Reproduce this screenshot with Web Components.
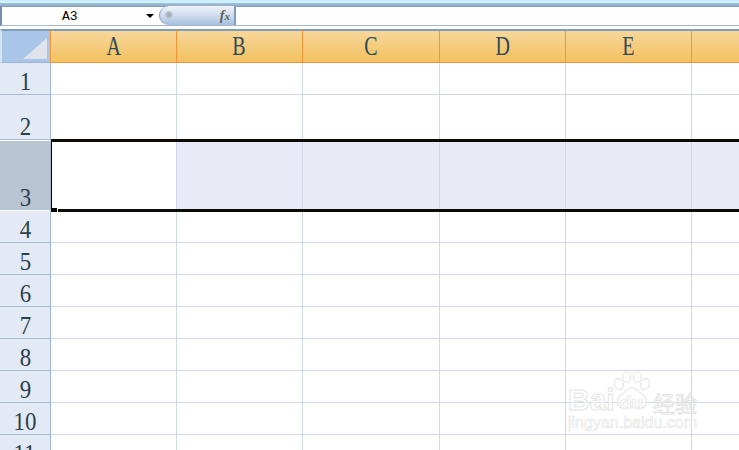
<!DOCTYPE html>
<html>
<head>
<meta charset="utf-8">
<style>
  html, body { margin: 0; padding: 0; height: 100%; overflow: hidden; background: #fff; }
</style>
</head>
<body>
<excel-window></excel-window>
<script>
// column widths and row heights include their right/bottom grid line
const COLS = [
  ['A', 126], ['B', 126], ['C', 137], ['D', 126], ['E', 126], ['', 60]
];
const ROWS = [
  ['1', 32], ['2', 45], ['3', 71], ['4', 32], ['5', 32], ['6', 32], ['7', 32],
  ['8', 32], ['9', 32], ['10', 32], ['11', 32]
];
const SELECTED_ROW = '3';

class FormulaBar extends HTMLElement {
  constructor() {
    super();
    this.attachShadow({ mode: 'open' });
    this.shadowRoot.innerHTML = `
      <style>
        :host { display: block; height: 29px; background: #fff; }
        .ribbon { height: 6px; background: linear-gradient(#c4eefc 0, #d3f3fd 50%, #a5bdd8 50%, #93aeca 100%); }
        .bar { display: flex; height: 20px; box-sizing: border-box; border-top: 1px solid #7f9cbb; border-left: 2px solid #6f91b3; border-bottom: 1px solid #a9b9cb; }
        .name {
          width: 155px; box-sizing: border-box; padding-left: 60px; display: flex; align-items: center;
          font: 13px "Liberation Mono", monospace; color: #000; position: relative;
        }
        .arrow { position: absolute; left: 144px; top: 7px; width: 0; height: 0;
          border-left: 4px solid transparent; border-right: 4px solid transparent; border-top: 4px solid #000; }
        .fx {
          width: 77px; height: 19px; box-sizing: border-box; margin: -1px 0 0 2px;
          border-radius: 10px 0 0 10px; border-left: 1px solid #7f9dbe; border-right: 2px solid #7f9dbe;
          background: linear-gradient(#f0f4fa, #cfdcee 50%, #a6bfde);
          display: flex; align-items: center; justify-content: flex-end; padding-right: 4px;
          position: relative;
          font: italic bold 14px "Liberation Serif", serif; color: #5f5f5f;
        }
        .fx::before { content: ''; position: absolute; left: 5px; top: 5px; width: 8px; height: 8px;
          border-radius: 50%; background: radial-gradient(#98a2ae, #d5dee8); }
        .fx small { font-size: 11px; }
        .line { flex: 1; }
      </style>
      <div class="ribbon"></div>
      <div class="bar">
        <div class="name">A3<span class="arrow"></span></div>
        <div class="fx">f<small>x</small></div>
        <div class="line"></div>
      </div>
    `;
  }
}

class SheetGrid extends HTMLElement {
  constructor() {
    super();
    this.attachShadow({ mode: 'open' });
    const colTpl = COLS.map(c => c[1] + 'px').join(' ');
    const rowTpl = ROWS.map(r => r[1] + 'px').join(' ');
    let html = `
      <style>
        :host { display: block; font-family: "Liberation Serif", "DejaVu Serif", serif; position: relative; }
        .grid { display: grid; grid-template-columns: 51px ${colTpl}; grid-template-rows: 34px ${rowTpl}; }
        .corner { background: #a9c5e8; border: 2px solid #d5e3f3; border-top: 2px solid #7f9cbb; border-right: 1px solid #f29536; border-bottom: 1px solid #9db5d3; box-sizing: border-box; position: relative; }
        .corner::after { content: ''; position: absolute; right: 3px; bottom: 3px; width: 0; height: 0;
          border-left: 24px solid transparent; border-bottom: 21px solid #dfe4ec; }
        .ch { background: linear-gradient(#f8d79b, #f2c160); border-top: 2px solid #7f9cbb; border-right: 1px solid #f29536; border-bottom: 1px solid #f29536; box-sizing: border-box;
          display: flex; align-items: center; justify-content: center; font-size: 27px; line-height: 27px; color: #2f4a58; }
        .ch span { display: inline-block; transform: scaleX(.74); }
        .rh { background: #e3eaf6; border-right: 1px solid #9db8d6; border-bottom: 1px solid #a5bcd8; box-sizing: border-box;
          display: flex; align-items: flex-end; justify-content: center; font-size: 26px; line-height: 26px; color: #2b3f4c; padding-bottom: 1px; }
        .rh span { display: inline-block; transform: translateY(2px) scaleX(.88); }
        .rh.sel { background: #b8c4d2; border-top: 1px solid #fff; border-bottom-color: #fff; }
        .c { border-right: 1px solid #cfd9e6; border-bottom: 1px solid #cdd8e8; box-sizing: border-box; background: #fff; }
        .c.sel { background: #e7eaf5; border-right-color: #d3d8e8; }
        .c.active { background: #fff; }
        .cursor { position: absolute; left: 51px; right: 0; top: 110px; height: 73px; box-sizing: border-box;
          border-top: 3px solid #0e0a06; border-bottom: 3px solid #0e0a06; border-left: 1px solid #000; pointer-events: none; }
        .handle { position: absolute; left: 52px; top: 179px; width: 5px; height: 4px; background: #000; border-right: 1px solid #fff; }
      </style>
      <div class="grid">
      <div class="corner"></div>`;
    COLS.forEach(c => { html += `<div class="ch"><span>${c[0]}</span></div>`; });
    ROWS.forEach(r => {
      const sel = r[0] === SELECTED_ROW;
      html += `<div class="rh ${sel ? 'sel' : ''}"><span>${r[0]}</span></div>`;
      COLS.forEach((c, i) => {
        html += `<div class="c ${sel ? 'sel' : ''} ${sel && i === 0 ? 'active' : ''}"></div>`;
      });
    });
    html += `</div><div class="cursor"></div><div class="handle"></div>`;
    this.shadowRoot.innerHTML = html;
  }
}

class BaiduMark extends HTMLElement {
  constructor() {
    super();
    this.attachShadow({ mode: 'open' });
    this.shadowRoot.innerHTML = `
      <style>
        :host { display: block; position: absolute; left: 565px; top: 368px; width: 150px; height: 76px; color: #fff; pointer-events: none; }
        svg { position: absolute; left: 48px; top: 2px; }
        span { position: absolute; color: rgba(255,255,255,.75); white-space: nowrap; }
        .word { left: 3px; top: 18px; font: bold 30px/28px "Liberation Sans", sans-serif; -webkit-text-stroke: 1px #e4e4e4; }
        .du { left: 55px; top: 25px; font: bold 19px/20px "Liberation Sans", sans-serif; -webkit-text-stroke: .7px #e4e4e4; }
        .cn { left: 88px; top: 22px; font: 22px/24px "Noto Sans CJK SC", sans-serif; -webkit-text-stroke: 1px #e4e4e4; }
        .url { left: 3px; top: 46px; font: 16px/18px "Liberation Sans", sans-serif; -webkit-text-stroke: .6px #e4e4e4; }
      </style>
      <svg width="38" height="42" viewBox="0 0 44 46" fill="rgba(255,255,255,.6)" stroke="#e4e4e4" stroke-width="1.3">
        <ellipse cx="7" cy="15" rx="5" ry="6.5" transform="rotate(-20 7 15)"/>
        <ellipse cx="16" cy="7" rx="4.5" ry="6"/>
        <ellipse cx="28" cy="7" rx="4.5" ry="6"/>
        <ellipse cx="37" cy="15" rx="5" ry="6.5" transform="rotate(20 37 15)"/>
        <path d="M22 19c-6 0-7 5-12 8-6 4-7 16 3 16 4 0 6-2 9-2s5 2 9 2c10 0 9-12 3-16-5-3-6-8-12-8z"/>
      </svg>
      <span class="word">Bai</span>
      <span class="du">du</span>
      <span class="cn">经验</span>
      <span class="url">jingyan.baidu.com</span>
    `;
  }
}

class ExcelWindow extends HTMLElement {
  constructor() {
    super();
    this.attachShadow({ mode: 'open' });
    this.shadowRoot.innerHTML = `
      <style>
        :host { display: block; width: 739px; height: 450px; overflow: hidden; position: relative; }
      </style>
      <formula-bar></formula-bar>
      <sheet-grid></sheet-grid>
      <baidu-mark></baidu-mark>
    `;
  }
}

customElements.define('formula-bar', FormulaBar);
customElements.define('sheet-grid', SheetGrid);
customElements.define('baidu-mark', BaiduMark);
customElements.define('excel-window', ExcelWindow);
</script>
</body>
</html>
